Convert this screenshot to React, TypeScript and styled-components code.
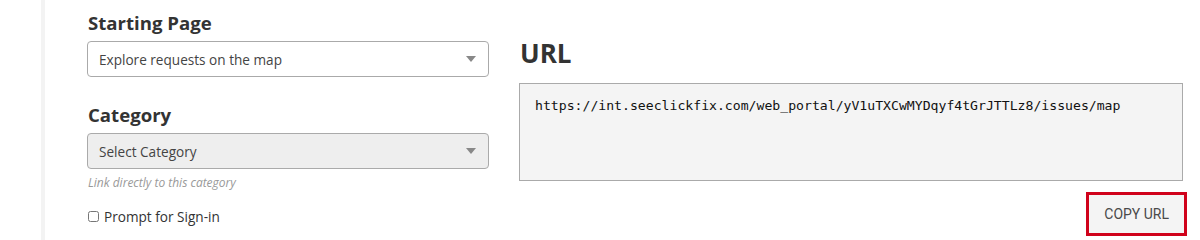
import styled, { createGlobalStyle } from 'styled-components'

const GlobalStyle = createGlobalStyle`
  html, body {
    margin: 0;
    padding: 0;
    background: #ffffff;
  }
  body {
    font-family: 'Open Sans', 'Liberation Sans', sans-serif;
    color: #333333;
  }
`

const Page = styled.div`
  display: flex;
  height: 240px;
  overflow: hidden;
`

const SideStrip = styled.div`
  margin-left: 41px;
  width: 4px;
  background-color: #f3f3f3;
`

const Content = styled.div`
  display: flex;
  padding-left: 42px;
  gap: 30px;
`

const LeftColumn = styled.div`
  width: 402px;
  display: flex;
  flex-direction: column;
`

const RightColumn = styled.div`
  width: 664px;
  display: flex;
  flex-direction: column;
`

const Label = styled.h3<{ $top: number }>`
  margin: ${(p) => p.$top}px 0 6px 1px;
  font-size: 18.6px;
  font-weight: 700;
  line-height: 24px;
  color: #333333;
`

const SelectBox = styled.div<{ $muted?: boolean }>`
  height: 34px;
  display: flex;
  align-items: center;
  justify-content: space-between;
  padding: 0 12px 0 11px;
  border: 1px solid #aaaaaa;
  border-radius: 4px;
  background-color: ${(p) => (p.$muted ? '#eeeeee' : '#ffffff')};
  font-size: 13.6px;
  color: #444444;
  cursor: pointer;
`

const Arrow = styled.span`
  width: 0;
  height: 0;
  border-left: 5px solid transparent;
  border-right: 5px solid transparent;
  border-top: 6px solid #888888;
`

const Hint = styled.p`
  margin: 5px 0 0 1px;
  font-size: 12px;
  font-style: italic;
  color: #999999;
`

const CheckRow = styled.label`
  margin: 16px 0 0 1px;
  display: flex;
  align-items: center;
  gap: 5px;
  font-size: 13.6px;
  color: #333333;
`

const Check = styled.input`
  margin: 0;
  width: 11px;
  height: 11px;
`

const Title = styled.h2`
  margin: 36px 0 0 1px;
  font-size: 26px;
  font-weight: 700;
  line-height: 34px;
  color: #333333;
`

const UrlBox = styled.div`
  margin-top: 13px;
  height: 98px;
  border: 1px solid #aaaaaa;
  background-color: #f4f4f4;
  padding: 14px 15px;
  box-sizing: border-box;
  font-family: 'DejaVu Sans Mono', 'Liberation Mono', monospace;
  font-size: 13.15px;
  color: #111111;
`

const ButtonRow = styled.div`
  display: flex;
  justify-content: flex-end;
  margin-top: 11px;
`

const CopyButton = styled.button`
  height: 44px;
  padding: 0 15px;
  border: 3px solid #d0021b;
  background-color: #f4f4f4;
  font-family: Roboto, 'Liberation Sans', sans-serif;
  font-size: 14px;
  color: #4a4a4a;
  margin-right: -4px;
`

const App = () => (
  <>
    <GlobalStyle />
    <Page>
      <SideStrip />
      <Content>
        <LeftColumn>
          <Label $top={11}>Starting Page</Label>
          <SelectBox>
            <span>Explore requests on the map</span>
            <Arrow />
          </SelectBox>
          <Label $top={26}>Category</Label>
          <SelectBox $muted>
            <span>Select Category</span>
            <Arrow />
          </SelectBox>
          <Hint>Link directly to this category</Hint>
          <CheckRow>
            <Check type="checkbox" />
            Prompt for Sign-in
          </CheckRow>
        </LeftColumn>
        <RightColumn>
          <Title>URL</Title>
          <UrlBox>https://int.seeclickfix.com/web_portal/yV1uTXCwMYDqyf4tGrJTTLz8/issues/map</UrlBox>
          <ButtonRow>
            <CopyButton>COPY URL</CopyButton>
          </ButtonRow>
        </RightColumn>
      </Content>
    </Page>
  </>
)

export default App
